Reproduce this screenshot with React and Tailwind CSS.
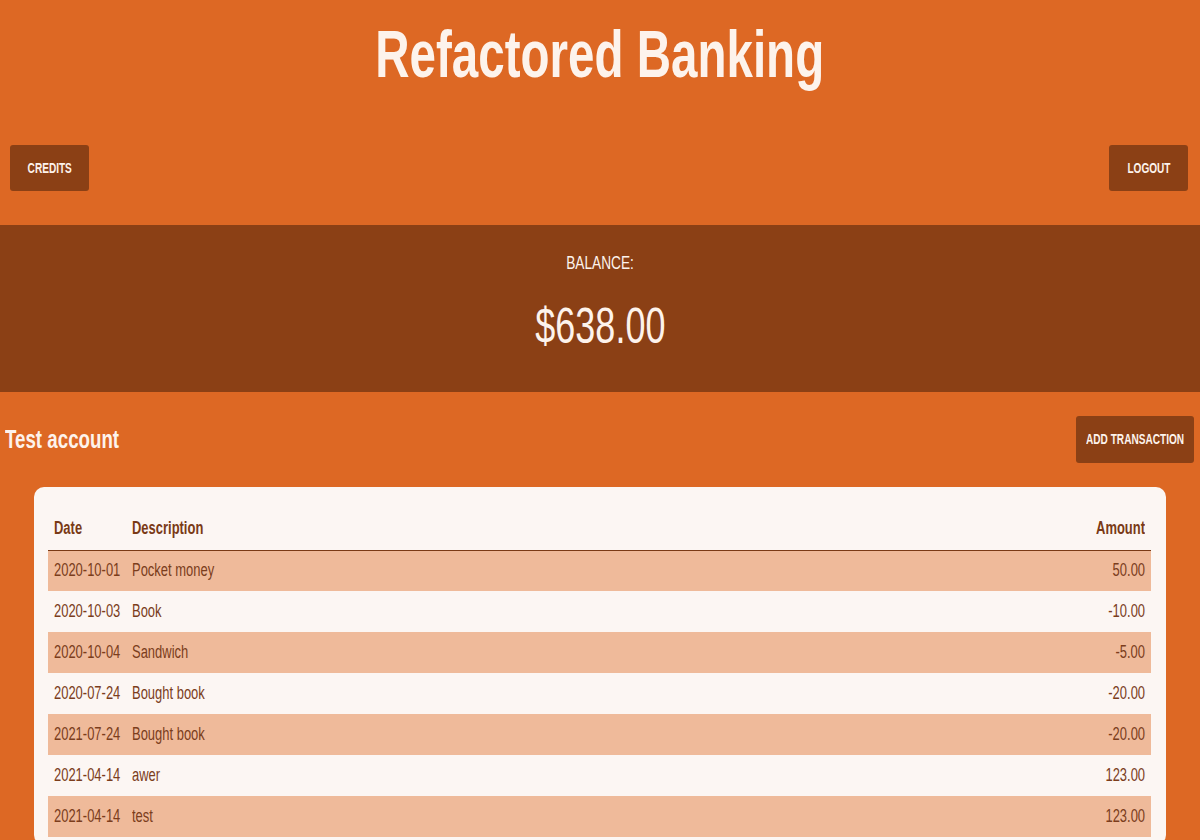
const rows = [
  { date: "2020-10-01", desc: "Pocket money", amount: "50.00" },
  { date: "2020-10-03", desc: "Book", amount: "-10.00" },
  { date: "2020-10-04", desc: "Sandwich", amount: "-5.00" },
  { date: "2020-07-24", desc: "Bought book", amount: "-20.00" },
  { date: "2021-07-24", desc: "Bought book", amount: "-20.00" },
  { date: "2021-04-14", desc: "awer", amount: "123.00" },
  { date: "2021-04-14", desc: "test", amount: "123.00" },
];

const font = { fontFamily: '"Liberation Sans", Arial, sans-serif' };

// narrow text: the face is a condensed grotesque, squeeze Liberation Sans to match
function Sq({ children, origin = "origin-left" }) {
  return <span className={`inline-block whitespace-nowrap scale-x-[0.72] ${origin}`}>{children}</span>;
}

function Button({ children, className = "" }) {
  return (
    <button
      className={`flex h-[46px] items-center justify-center rounded-[3px] bg-[#8b4015] text-[14px] font-bold uppercase text-[#fdf3ec] ${className}`}
    >
      <Sq origin="origin-center">{children}</Sq>
    </button>
  );
}

export default function App() {
  return (
    <div style={font} className="min-h-[840px] bg-[#dd6824] text-[#fdf3ec]">
      <header className="pt-[21px]">
        <h1 className="text-center text-[66px] font-bold leading-[66px]">
          <Sq origin="origin-center">Refactored Banking</Sq>
        </h1>
        <div className="mt-[58px] flex items-center justify-between pl-[10px] pr-[12px]">
          <Button className="w-[79px]">Credits</Button>
          <Button className="w-[79px]">Logout</Button>
        </div>
      </header>

      <section className="mt-[34px] flex h-[167px] flex-col items-center bg-[#8b4015] pt-[26px]">
        <div className="text-[19px] leading-[24px]">
          <Sq origin="origin-center">BALANCE:</Sq>
        </div>
        <div className="mt-[21px] text-[50px] leading-[60px]">
          <Sq origin="origin-center">$638.00</Sq>
        </div>
      </section>

      <div className="mt-[24px] flex items-center justify-between pl-[5px] pr-[6px]">
        <h2 className="text-[26px] font-bold">
          <Sq>Test account</Sq>
        </h2>
        <Button className="h-[47px] w-[118px]">Add transaction</Button>
      </div>

      <div className="mx-[34px] mt-[24px] rounded-[10px] bg-[#fcf6f3] pl-[14px] pr-[15px] pt-[21px] pb-[8px]">
        <table className="w-full table-fixed border-collapse text-[18px] text-[#7b3d1c]">
          <thead>
            <tr className="border-b border-[#7a3a16]">
              <th className="h-[42px] w-[78px] px-[6px] text-left font-bold text-[#7a3a16]">
                <Sq>Date</Sq>
              </th>
              <th className="px-[6px] text-left font-bold text-[#7a3a16]">
                <Sq>Description</Sq>
              </th>
              <th className="w-[100px] px-[6px] text-right font-bold text-[#7a3a16]">
                <Sq origin="origin-right">Amount</Sq>
              </th>
            </tr>
          </thead>
          <tbody>
            {rows.map((r, i) => (
              <tr key={i} className={i % 2 === 0 ? "bg-[#efba9a]" : "bg-[#fcf6f3]"}>
                <td className="h-[41px] px-[6px]">
                  <Sq>{r.date}</Sq>
                </td>
                <td className="px-[6px]">
                  <Sq>{r.desc}</Sq>
                </td>
                <td className="px-[6px] text-right">
                  <Sq origin="origin-right">{r.amount}</Sq>
                </td>
              </tr>
            ))}
          </tbody>
        </table>
      </div>
    </div>
  );
}
